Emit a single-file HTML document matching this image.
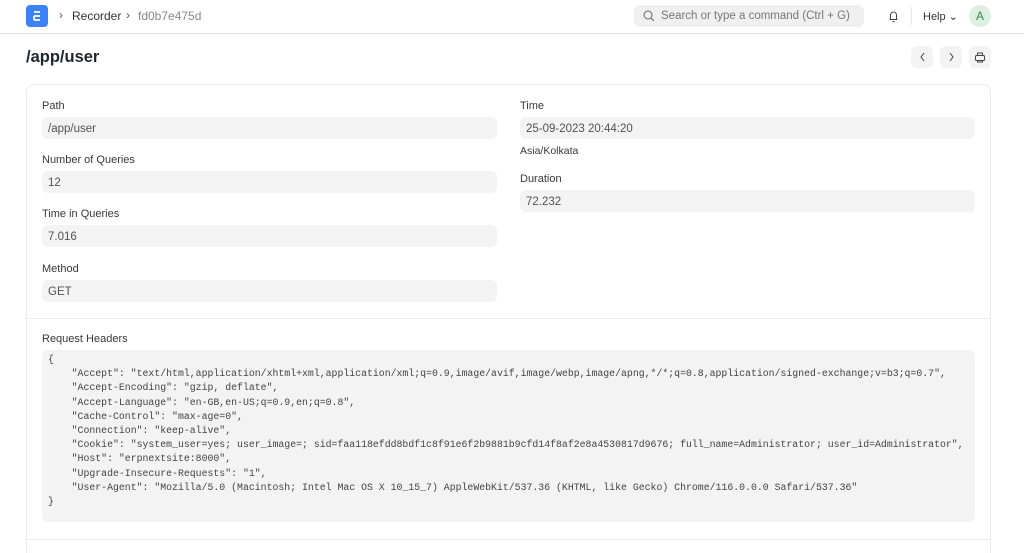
<!DOCTYPE html>
<html><head><meta charset="utf-8"><style>
*{box-sizing:border-box;margin:0;padding:0}
html,body{width:1024px;height:553px;overflow:hidden}
body{background:#fff;font-family:"Liberation Sans",sans-serif;color:#1f272e;position:relative}
.nav{position:absolute;left:0;top:0;width:1024px;height:34px;border-bottom:1px solid #e6e6e6;box-shadow:0 1px 2px rgba(0,0,0,.04)}
.abs{position:absolute}
.lbl{position:absolute;font-size:11px;color:#383838}
.box{position:absolute;height:22px;background:#f3f3f3;border-radius:6px;font-size:11.5px;color:#525252;padding:6px 6px;line-height:13px}
.btn{position:absolute;top:46px;width:22px;height:22px;background:#f3f3f3;border-radius:6px}
pre{font-family:"Liberation Mono",monospace;font-size:9.85px;line-height:14.2px;color:#444}
</style></head><body>
<div class="nav">
 <div class="abs" style="left:26px;top:5px;width:22px;height:22px;border-radius:4px;background:#3b82f6"></div>
 <svg class="abs" style="left:26px;top:5px" width="22" height="22"><path d="M8 7h6M8 11h6M8 15h6M8 11v4" stroke="#fff" stroke-width="1.8" fill="none"/></svg>
 <div class="abs" style="left:59px;top:8px;font-size:12px;color:#555">›</div>
 <div class="abs" style="left:72px;top:9px;font-size:12px;color:#333">Recorder</div>
 <div class="abs" style="left:126px;top:8px;font-size:12px;color:#555">›</div>
 <div class="abs" style="left:138px;top:9px;font-size:12px;color:#888">fd0b7e475d</div>
 <div class="abs" style="left:634px;top:5px;width:230px;height:22px;background:#f0f0f0;border-radius:6px"></div>
 <svg class="abs" style="left:643px;top:10px" width="12" height="12"><circle cx="5" cy="5" r="4" stroke="#666" fill="none"/><path d="M8 8l3 3" stroke="#666"/></svg>
 <div class="abs" style="left:661px;top:10px;font-size:11.5px;color:#777">Search or type a command (Ctrl + G)</div>
 <svg class="abs" style="left:887px;top:9px" width="13" height="14"><path d="M2.5 10.5h8M3.5 10.5V6a3 3 0 0 1 6 0v4.5M5.5 12.5h2" stroke="#444" fill="none"/></svg>
 <div class="abs" style="left:911px;top:7px;width:1px;height:18px;background:#e6e6e6"></div>
 <div class="abs" style="left:923px;top:10px;font-size:11px;color:#333">Help ⌄</div>
 <div class="abs" style="left:969px;top:5px;width:22px;height:22px;border-radius:50%;background:#ddefe0;color:#3b8a4c;font-size:12px;text-align:center;line-height:22px">A</div>
</div>
<div class="abs" style="left:26px;top:48px;font-size:16.5px;font-weight:bold">/app/user</div>
<div class="btn" style="left:911px"></div><div class="btn" style="left:940px"></div><div class="btn" style="left:969px"></div>
<svg class="abs" style="left:911px;top:46px" width="80" height="22"><path d="M13 7l-3 4 3 4" stroke="#444" fill="none"/><path d="M39 7l3 4-3 4" stroke="#444" fill="none"/><rect x="64.5" y="9.5" width="9" height="5" rx="1" stroke="#444" fill="none"/><path d="M66.5 9.5V7h5v2.5M66.5 14.5v1.5h5v-1.5" stroke="#444" fill="none"/></svg>
<div class="abs" style="left:26px;top:84px;width:965px;height:480px;border:1px solid #ebebeb;border-radius:8px"></div>
<div class="abs" style="left:27px;top:318px;width:963px;height:1px;background:#ebebeb"></div>
<div class="abs" style="left:27px;top:539px;width:963px;height:1px;background:#ebebeb"></div>
<div class="lbl" style="left:42px;top:100px">Path</div><div class="box" style="left:42px;top:117px;width:455px">/app/user</div>
<div class="lbl" style="left:42px;top:154px">Number of Queries</div><div class="box" style="left:42px;top:171px;width:455px">12</div>
<div class="lbl" style="left:42px;top:208px">Time in Queries</div><div class="box" style="left:42px;top:225px;width:455px">7.016</div>
<div class="lbl" style="left:42px;top:263px">Method</div><div class="box" style="left:42px;top:280px;width:455px">GET</div>
<div class="lbl" style="left:520px;top:100px">Time</div><div class="box" style="left:520px;top:117px;width:455px">25-09-2023 20:44:20</div>
<div class="lbl" style="left:520px;top:145px;font-size:10.5px">Asia/Kolkata</div>
<div class="lbl" style="left:520px;top:173px">Duration</div><div class="box" style="left:520px;top:190px;width:455px">72.232</div>
<div class="lbl" style="left:42px;top:333px">Request Headers</div>
<div class="abs" style="left:42px;top:350px;width:933px;height:172px;background:#f3f3f3;border-radius:6px;padding:3px 6px">
<pre>{
    "Accept": "text/html,application/xhtml+xml,application/xml;q=0.9,image/avif,image/webp,image/apng,*/*;q=0.8,application/signed-exchange;v=b3;q=0.7",
    "Accept-Encoding": "gzip, deflate",
    "Accept-Language": "en-GB,en-US;q=0.9,en;q=0.8",
    "Cache-Control": "max-age=0",
    "Connection": "keep-alive",
    "Cookie": "system_user=yes; user_image=; sid=faa118efdd8bdf1c8f91e6f2b9881b9cfd14f8af2e8a4530817d9676; full_name=Administrator; user_id=Administrator",
    "Host": "erpnextsite:8000",
    "Upgrade-Insecure-Requests": "1",
    "User-Agent": "Mozilla/5.0 (Macintosh; Intel Mac OS X 10_15_7) AppleWebKit/537.36 (KHTML, like Gecko) Chrome/116.0.0.0 Safari/537.36"
}</pre></div>
</body></html>
